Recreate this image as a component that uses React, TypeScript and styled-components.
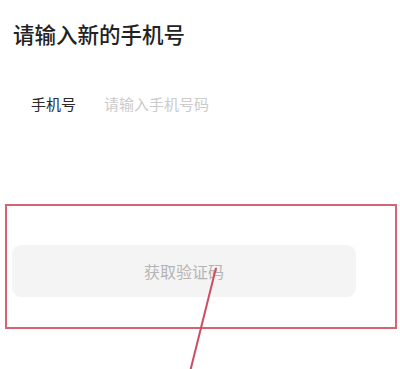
import styled, { createGlobalStyle } from "styled-components";

const Global = createGlobalStyle`
  body {
    margin: 0;
    background: #ffffff;
    font-family: "Noto Sans CJK SC", "Noto Sans", sans-serif;
  }
`;

const Page = styled.div`
  position: relative;
  width: 400px;
  height: 369px;
  overflow: hidden;
  display: flex;
  flex-direction: column;
`;

const Title = styled.h1`
  margin: 22px 0 0 13px;
  font-size: 21.5px;
  line-height: 24px;
  font-weight: 500;
  color: #222222;
`;

const Field = styled.div`
  display: flex;
  align-items: center;
  gap: 28px;
  margin: 48px 0 0 31px;
  font-size: 15px;
  line-height: 20px;
`;

const Label = styled.span`
  color: #2a2a2a;
`;

const Placeholder = styled.span`
  color: #cbcbcb;
`;

const Highlight = styled.div`
  margin: 90px 3px 0 5px;
  height: 125px;
  border: 2px solid #d46472;
  display: flex;
  align-items: center;
  padding: 0 39px 0 5px;
  box-sizing: border-box;
`;

const Button = styled.div`
  flex: 1;
  height: 52px;
  margin-top: 9px;
  border-radius: 9px;
  background: #f4f4f4;
  color: #b4b4b4;
  font-size: 16px;
  display: flex;
  align-items: center;
  justify-content: center;
`;

const Arrow = styled.svg`
  position: absolute;
  left: 0;
  top: 0;
  pointer-events: none;
`;

export default function App() {
  return (
    <Page>
      <Global />
      <Title>请输入新的手机号</Title>
      <Field>
        <Label>手机号</Label>
        <Placeholder>请输入手机号码</Placeholder>
      </Field>
      <Highlight>
        <Button>获取验证码</Button>
      </Highlight>
      <Arrow width="400" height="369" viewBox="0 0 400 369">
        <line x1="216" y1="268" x2="190" y2="372" stroke="#d04a60" strokeWidth="2" />
      </Arrow>
    </Page>
  );
}
